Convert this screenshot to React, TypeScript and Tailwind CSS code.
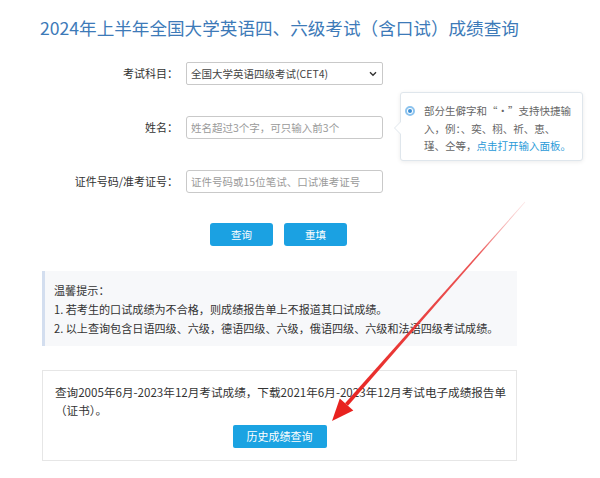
import React from "react";

const font = { fontFamily: '"Noto Sans CJK SC", "Noto Sans", sans-serif' };

function Row({ label, children }: { label: string; children: React.ReactNode }) {
  return (
    <div className="flex items-center h-[23px]">
      <div className="w-[146px] text-right text-[11px] text-[#333] pr-[8px] whitespace-nowrap">{label}</div>
      {children}
    </div>
  );
}

export default function App() {
  return (
    <div className="relative w-[600px] h-[478px] bg-white overflow-hidden" style={font}>
      <div className="pt-[16px] pl-[40px] h-[62px]">
        <h1 className="text-[17.6px] leading-[24px] text-[#3d7ab8] font-normal whitespace-nowrap">
          2024年上半年全国大学英语四、六级考试（含口试）成绩查询
        </h1>
      </div>

      <div className="flex flex-col gap-[31px] pl-[40px]">
        <Row label="考试科目：">
          <div className="relative w-[197px] h-[23px] border border-[#c9c9c9] rounded-[2px] flex items-center pl-[4px] text-[10.5px] text-[#444]">
            全国大学英语四级考试(CET4)
            <svg className="absolute right-[5px] top-[8px]" width="8" height="6" viewBox="0 0 8 6">
              <path d="M1 1.2 L4 4.2 L7 1.2" fill="none" stroke="#333" strokeWidth="1.4" />
            </svg>
          </div>
        </Row>
        <Row label="姓名：">
          <div className="w-[197px] h-[23px] border border-[#c9c9c9] rounded-[3px] flex items-center pl-[4px] text-[10.5px] text-[#9a9a9a]">
            姓名超过3个字，可只输入前3个
          </div>
        </Row>
        <Row label="证件号码/准考证号：">
          <div className="w-[197px] h-[23px] border border-[#c9c9c9] rounded-[3px] flex items-center pl-[4px] text-[10.5px] text-[#9a9a9a]">
            证件号码或15位笔试、口试准考证号
          </div>
        </Row>
      </div>

      <div className="flex gap-[11px] pl-[210px] mt-[30px]">
        <button className="w-[63px] h-[23px] rounded-[3px] bg-[#1ba1e2] text-white text-[10.5px]">查询</button>
        <button className="w-[63px] h-[23px] rounded-[3px] bg-[#1ba1e2] text-white text-[10.5px]">重填</button>
      </div>

      <div className="ml-[42px] w-[475px] mt-[25px] bg-[#f7f8fa] border-l-[3px] border-[#d3deef] pl-[9px] pt-[10px] pb-[8px] text-[11.1px] leading-[19px] text-[#333]">
        <div>温馨提示：</div>
        <div>1. 若考生的口试成绩为不合格，则成绩报告单上不报道其口试成绩。</div>
        <div className="whitespace-nowrap">2. 以上查询包含日语四级、六级，德语四级、六级，俄语四级、六级和法语四级考试成绩。</div>
      </div>

      <div className="ml-[42px] w-[475px] mt-[24px] border border-[#e6e6e6] px-[12px] pt-[12px] pb-[12px]">
        <div className="text-[11.6px] leading-[18px] text-[#333] whitespace-nowrap">
          查询2005年6月-2023年12月考试成绩，下载2021年6月-2023年12月考试电子成绩报告单
          <br />
          （证书）。
        </div>
        <div className="flex justify-center mt-[6px]">
          <button className="w-[94px] h-[23px] rounded-[2px] bg-[#1ba3e2] text-white text-[11px]">历史成绩查询</button>
        </div>
      </div>

      {/* tooltip */}
      <div className="absolute left-[400px] top-[92px] w-[183px] h-[69px] bg-white border border-[#dfe6ec] rounded-[3px] shadow-[0_1px_4px_rgba(0,0,0,0.08)] pl-[23px] pt-[9px] text-[10.5px] leading-[17.5px] text-[#666]">
        <span className="absolute left-[4px] top-[13px] w-[10px] h-[10px] rounded-full border-[2px] border-[#8cc3ee] flex items-center justify-center">
          <span className="w-[4px] h-[4px] rounded-full bg-[#3d8fd6]" />
        </span>
        <div className="whitespace-nowrap">部分生僻字和“·”支持快捷输</div>
        <div className="whitespace-nowrap">入，例：、奕、栩、祈、恵、</div>
        <div className="whitespace-nowrap">
          瑾、仝等，<span className="text-[#2a9ad8]">点击打开输入面板。</span>
        </div>
        <span className="absolute left-[-7px] top-[28px] w-0 h-0 border-y-[7px] border-y-transparent border-r-[7px] border-r-[#dfe6ec]" />
        <span className="absolute left-[-6px] top-[28px] w-0 h-0 border-y-[7px] border-y-transparent border-r-[7px] border-r-white" />
      </div>

      {/* annotation arrow */}
      <svg className="absolute left-0 top-0 pointer-events-none" width="600" height="478" viewBox="0 0 600 478">
        <defs>
          <linearGradient id="ag" x1="525" y1="202" x2="340" y2="410" gradientUnits="userSpaceOnUse">
            <stop offset="0" stopColor="#f3a0a0" stopOpacity="0.3" />
            <stop offset="0.25" stopColor="#e83a3a" stopOpacity="0.85" />
            <stop offset="1" stopColor="#e8221f" />
          </linearGradient>
        </defs>
        <polygon points="525.2,202.2 524.8,201.8 345,403.2 348,405.8" fill="url(#ag)" />
        <polygon points="332,421 339.8,398.6 353.3,410.5" fill="#e8221f" />
      </svg>
    </div>
  );
}
